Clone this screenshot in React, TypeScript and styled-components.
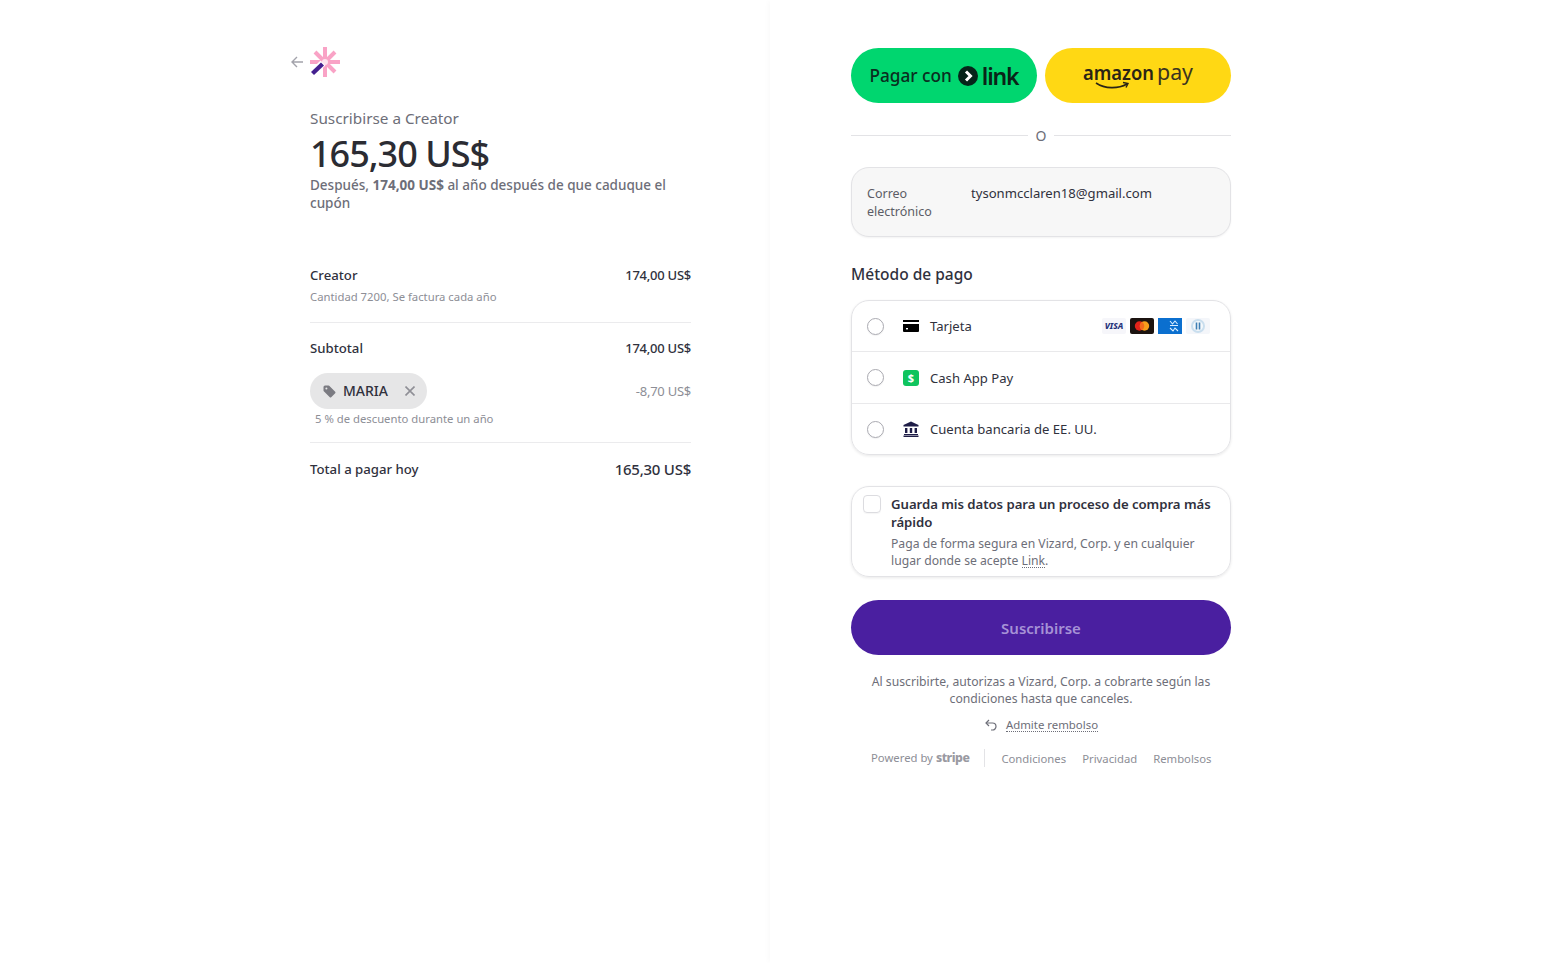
import React from 'react';
import styled, { createGlobalStyle } from 'styled-components';

const GlobalStyle = createGlobalStyle`
  html, body { margin: 0; padding: 0; background: #fff; }
  * { box-sizing: border-box; }
  body {
    font-family: "Noto Sans", "Open Sans", Arial, sans-serif;
    color: #30313d;
    -webkit-font-smoothing: antialiased;
  }
`;

const Page = styled.div`
  display: flex;
  width: 100%;
  height: 963px;
  overflow: hidden;
`;

const SummaryPane = styled.section`
  width: 770px;
  flex: none;
  display: flex;
  justify-content: flex-end;
  padding: 47px 79px 0 0;
`;

const SummaryInner = styled.div`
  width: 381px;
`;

const BrandRow = styled.div`
  display: flex;
  align-items: center;
  gap: 5px;
  height: 30px;
  margin-left: -21px;
  color: #a3a3ab;
`;

const Lead = styled.div`
  margin-top: 31px;
  font-size: 15.3px;
  line-height: 20px;
  color: #6d6e78;
`;

const Amount = styled.div`
  margin-top: 3px;
  font-size: 36px;
  line-height: 46px;
  font-weight: 500;
  letter-spacing: -1px;
  color: #2b2c33;
`;

const Note = styled.div`
  margin-top: -1px;
  font-size: 13.5px;
  line-height: 18px;
  font-weight: 500;
  color: #6d6e78;
  b { font-weight: 700; }
`;

const Lines = styled.div`
  margin-top: 54px;
`;

const Line = styled.div<{ $pad?: number; $ruled?: boolean }>`
  padding-bottom: ${(p) => p.$pad ?? 0}px;
  border-bottom: ${(p) => (p.$ruled ? '1px solid #ebebed' : 'none')};
`;

const LineTop = styled.div`
  display: flex;
  justify-content: space-between;
  align-items: center;
  line-height: 18px;
`;

const LineLabel = styled.span`
  font-size: 13.2px;
  font-weight: 500;
  color: #30313d;
`;

const LineValue = styled.span<{ $big?: boolean; $muted?: boolean }>`
  font-size: ${(p) => (p.$big ? 15 : 13)}px;
  font-weight: ${(p) => (p.$muted ? 400 : 500)};
  letter-spacing: -0.25px;
  color: ${(p) => (p.$muted ? '#8d8e96' : '#30313d')};
`;

const SmallNote = styled.div<{ $indent?: number; $gap?: number }>`
  margin-top: ${(p) => p.$gap ?? 5}px;
  margin-left: ${(p) => p.$indent ?? 0}px;
  font-size: 11.3px;
  line-height: 16px;
  color: #8d8e96;
`;

const SubtotalBlock = styled.div`
  padding-top: 16px;
`;

const DiscountRow = styled(LineTop)`
  margin-top: 16px;
  height: 36px;
`;

const Coupon = styled.div`
  display: inline-flex;
  align-items: center;
  width: 117px;
  height: 36px;
  padding: 0 12px 0 13px;
  border-radius: 18px;
  background: #e6e6e7;
  font-size: 14px;
  font-weight: 500;
  color: #30313d;
`;

const CouponName = styled.span`
  margin-left: 7px;
  flex: 1;
`;

const TotalBlock = styled.div`
  padding-top: 17px;
`;

const CheckoutPane = styled.section`
  flex: 1;
  padding: 48px 0 0 81px;
  box-shadow: -3px 0 5px -1px rgba(0, 0, 0, 0.025);
`;

const CheckoutInner = styled.div`
  width: 380px;
`;

const WalletRow = styled.div`
  display: grid;
  grid-template-columns: 186px 186px;
  gap: 8px;
`;

const WalletButton = styled.div<{ $bg: string }>`
  display: flex;
  align-items: center;
  justify-content: center;
  height: 55px;
  border-radius: 28px;
  background: ${(p) => p.$bg};
  color: #0a2e1f;
`;

const LinkLabel = styled.span`
  font-size: 17.2px;
  font-weight: 500;
  margin-right: 6px;
`;

const LinkWord = styled.span`
  font-size: 23px;
  font-weight: 600;
  letter-spacing: -1.1px;
  line-height: 30px;
  color: #0a2418;
  margin-left: 4px;
`;

const Or = styled.div`
  display: flex;
  align-items: center;
  gap: 8px;
  margin-top: 22px;
  height: 20px;
  font-size: 14px;
  color: #6d6e78;
  &::before, &::after {
    content: '';
    flex: 1;
    height: 1px;
    background: #e3e3e6;
  }
`;

const EmailCard = styled.div`
  display: grid;
  grid-template-columns: 104px 1fr;
  align-items: start;
  margin-top: 22px;
  height: 70px;
  padding: 16px 15px;
  border: 1px solid #e3e3e6;
  border-radius: 18px;
  background: #f7f7f7;
  box-shadow: 0 1px 2px rgba(0, 0, 0, 0.05);
  font-size: 12.5px;
  line-height: 18px;
`;

const EmailLabel = styled.span`
  padding-top: 1px;
  color: #5c5d66;
`;

const EmailValue = styled.span`
  font-size: 13.1px;
  color: #30313d;
`;

const SectionTitle = styled.h2`
  margin: 26px 0 0;
  font-size: 15.5px;
  line-height: 22px;
  font-weight: 500;
  color: #30313d;
`;

const MethodList = styled.div`
  margin-top: 15px;
  border: 1px solid #e3e3e6;
  border-radius: 18px;
  box-shadow: 0 1px 3px rgba(0, 0, 0, 0.09);
  overflow: hidden;
`;

const MethodRow = styled.div`
  display: flex;
  align-items: center;
  height: 51px;
  padding: 0 20px 0 15px;
  font-size: 13.1px;
  color: #30313d;
  &:first-child { height: 50px; }
  &:nth-child(2) { height: 52px; }
  & + & { border-top: 1px solid #e9e9eb; }
`;

const Radio = styled.span`
  width: 17px;
  height: 17px;
  flex: none;
  border-radius: 50%;
  border: 1px solid #a9a9b0;
  box-shadow: 0 1px 1px rgba(0, 0, 0, 0.06);
`;

const MethodIcon = styled.span`
  display: flex;
  width: 16px;
  height: 16px;
  flex: none;
  margin: 0 11px 0 19px;
`;

const CardBrands = styled.div`
  display: flex;
  gap: 4px;
  margin-left: auto;
`;

const SaveCard = styled.div`
  display: flex;
  gap: 10px;
  margin-top: 31px;
  height: 91px;
  padding: 8px 11px;
  border: 1px solid #e3e3e6;
  border-radius: 18px;
  box-shadow: 0 1px 3px rgba(0, 0, 0, 0.09);
`;

const Checkbox = styled.span`
  width: 18px;
  height: 18px;
  flex: none;
  border: 1px solid #dcdce0;
  border-radius: 4px;
  box-shadow: 0 1px 1px rgba(0, 0, 0, 0.04);
`;

const SaveTitle = styled.div`
  font-size: 13.2px;
  line-height: 18px;
  font-weight: 600;
  letter-spacing: -0.05px;
  color: #30313d;
`;

const SaveText = styled.div`
  margin-top: 4px;
  font-size: 12.2px;
  line-height: 17px;
  color: #6d6e78;
`;

const Dotted = styled.span`
  border-bottom: 1px dotted #6d6e78;
  line-height: 13px;
  display: inline-block;
`;

const SubmitButton = styled.button`
  display: block;
  width: 100%;
  height: 55px;
  margin-top: 23px;
  border: none;
  border-radius: 28px;
  background: #4a1fa0;
  color: #a692d6;
  font-family: inherit;
  font-size: 15px;
  font-weight: 600;
`;

const Terms = styled.p`
  margin: 18px 0 0;
  padding: 0 8px;
  text-align: center;
  font-size: 12.2px;
  line-height: 17px;
  color: #6d6e78;
`;

const RefundRow = styled.div`
  display: flex;
  justify-content: center;
  align-items: center;
  gap: 8px;
  margin-top: 9px;
  height: 18px;
  font-size: 11.4px;
  color: #6d6e78;
`;

const Footer = styled.footer`
  display: flex;
  align-items: center;
  margin-top: 14px;
  padding-left: 20px;
  height: 20px;
  font-size: 11.3px;
  color: #8d8e96;
`;

const PoweredBy = styled.span`
  display: flex;
  align-items: baseline;
  gap: 3px;
  padding-right: 15px;
  margin-right: 16px;
  border-right: 1px solid #e3e3e6;
  line-height: 18px;
  b { font-size: 12.3px; font-weight: 800; letter-spacing: -0.5px; color: #9a9aa2; }
`;

const FooterLink = styled.span`
  margin-right: 16px;
  &:last-child { margin-right: 0; }
`;

const Wand = () => (
  <svg width="30" height="30" viewBox="0 0 30 30">
    <g stroke="#f9a3c6" strokeWidth="4">
      <path d="M15 0v30M0 15h30M5 5l20 20M25 5L14 16" />
    </g>
    <circle cx="15" cy="15" r="3" fill="#fde3ee" />
    <path d="M2 26.5L13 16" stroke="#fff" strokeWidth="7" />
    <path d="M2.5 26.5L12.5 17" stroke="#44208f" strokeWidth="4.4" />
  </svg>
);

const BackArrow = () => (
  <svg width="16" height="16" viewBox="0 0 16 16" fill="none" stroke="currentColor" strokeWidth="1.4">
    <path d="M14 8H3M8 3L3 8l5 5" />
  </svg>
);

const LinkBadge = () => (
  <svg width="20" height="20" viewBox="0 0 20 20">
    <circle cx="10" cy="10" r="10" fill="#06241a" />
    <path d="M8 5.5L12.5 10 8 14.5" fill="none" stroke="#fff" strokeWidth="3" />
  </svg>
);

const AmazonPay = () => (
  <svg width="112" height="36" viewBox="0 0 112 36">
    <text x="1" y="22" fontFamily="'Noto Sans', sans-serif" fontSize="20" fontWeight="600" textLength="71" lengthAdjust="spacingAndGlyphs" fill="#2a2416">
      amazon
    </text>
    <text x="75" y="22" fontFamily="'Noto Sans', sans-serif" fontSize="21" textLength="36" lengthAdjust="spacingAndGlyphs" fill="#3a3320">
      pay
    </text>
    <path d="M14 25c9 6 22 6 31 1" fill="none" stroke="#2a2416" strokeWidth="1.6" />
    <path d="M41 24.5l5 1-2 4" fill="none" stroke="#2a2416" strokeWidth="1.4" />
  </svg>
);

const TagIcon = () => (
  <svg width="13" height="13" viewBox="0 0 13 13">
    <path d="M0.5 2v3.5a1 1 0 0 0 .3.7l6 6a1 1 0 0 0 1.4 0l4-4a1 1 0 0 0 0-1.4l-6-6a1 1 0 0 0-.7-.3H2a1.5 1.5 0 0 0-1.5 1.5z" fill="#7b7b82" />
    <circle cx="3.4" cy="3.4" r="1" fill="#e6e6e7" />
  </svg>
);

const CloseIcon = () => (
  <svg width="10" height="10" viewBox="0 0 10 10" stroke="#8f8f96" strokeWidth="1.6">
    <path d="M0.5 0.5l9 9M9.5 0.5l-9 9" />
  </svg>
);

const CardIcon = () => (
  <svg width="16" height="16" viewBox="0 0 16 16">
    <rect y="2" width="16" height="2" fill="#000" />
    <path d="M0 6h16v7a1 1 0 0 1-1 1H1a1 1 0 0 1-1-1z" fill="#000" />
    <rect x="3" y="10" width="2" height="1.4" fill="#fff" />
  </svg>
);

const CashAppIcon = () => (
  <svg width="16" height="16" viewBox="0 0 16 16">
    <rect width="16" height="16" rx="3" fill="#0fc45e" />
    <text x="8" y="12" textAnchor="middle" fontFamily="'Noto Sans', sans-serif" fontSize="11" fontWeight="700" fill="#fff">
      $
    </text>
  </svg>
);

const BankIcon = () => (
  <svg width="16" height="16" viewBox="0 0 16 16" fill="#1f1d47">
    <path d="M8 0.5L0.5 4v1.5h15V4z" />
    <path d="M2 7h2.4v5H2zM6.8 7h2.4v5H6.8zM11.6 7H14v5h-2.4zM1 13h14v1H1zM0.5 14.6h15V16H.5z" />
  </svg>
);

const VisaMark = () => (
  <svg width="24" height="16" viewBox="0 0 24 16">
    <rect width="24" height="16" rx="2" fill="#f6f6fa" />
    <text x="12" y="11.2" textAnchor="middle" fontFamily="'Noto Sans', sans-serif" fontSize="8.5" fontWeight="800" fontStyle="italic" fill="#26337a">
      VISA
    </text>
  </svg>
);

const MasterMark = () => (
  <svg width="24" height="16" viewBox="0 0 24 16">
    <rect width="24" height="16" rx="2" fill="#1b1310" />
    <circle cx="9.5" cy="8" r="4.7" fill="#e2231a" />
    <circle cx="14.5" cy="8" r="4.7" fill="#f79e1b" />
    <path d="M12 4a4.7 4.7 0 0 1 0 8 4.7 4.7 0 0 1 0-8z" fill="#f26a1b" />
  </svg>
);

const AmexMark = () => (
  <svg width="24" height="16" viewBox="0 0 24 16">
    <rect width="24" height="16" fill="#0b6fcf" />
    <g fill="none" stroke="#dbeeff" strokeWidth="1.1">
      <path d="M12 3l2.5 3 2.5-3 2.5 3" />
      <path d="M12 7.5h8M12 10l3 3 2-3 3 3" />
    </g>
  </svg>
);

const DinersMark = () => (
  <svg width="24" height="16" viewBox="0 0 24 16">
    <rect width="24" height="16" rx="2" fill="#f4f6fa" />
    <circle cx="12" cy="8" r="7" fill="#c9deee" />
    <circle cx="12" cy="8" r="5" fill="#f4f8fb" />
    <path d="M10.5 4.6v6.8M13.5 4.6v6.8" stroke="#3f7fb5" strokeWidth="1.6" />
  </svg>
);

const RefundIcon = () => (
  <svg width="14" height="14" viewBox="0 0 14 14" fill="none" stroke="#6d6e78" strokeWidth="1.2">
    <path d="M5 2L2 5l3 3" />
    <path d="M2 5h6.5a3.5 3.5 0 0 1 0 7H7" />
  </svg>
);

const App = () => (
  <Page>
    <GlobalStyle />
    <SummaryPane>
      <SummaryInner>
        <BrandRow>
          <BackArrow />
          <Wand />
        </BrandRow>
        <Lead>Suscribirse a Creator</Lead>
        <Amount>165,30 US$</Amount>
        <Note>
          Después, <b>174,00 US$</b> al año después de que caduque el cupón
        </Note>
        <Lines>
          <Line $pad={17} $ruled>
            <LineTop>
              <LineLabel>Creator</LineLabel>
              <LineValue>174,00 US$</LineValue>
            </LineTop>
            <SmallNote>Cantidad 7200, Se factura cada año</SmallNote>
          </Line>
          <Line $pad={15} $ruled>
            <SubtotalBlock>
              <LineTop>
                <LineLabel>Subtotal</LineLabel>
                <LineValue>174,00 US$</LineValue>
              </LineTop>
              <DiscountRow>
                <Coupon>
                  <TagIcon />
                  <CouponName>MARIA</CouponName>
                  <CloseIcon />
                </Coupon>
                <LineValue $muted>-8,70 US$</LineValue>
              </DiscountRow>
              <SmallNote $indent={5} $gap={2}>
                5 % de descuento durante un año
              </SmallNote>
            </SubtotalBlock>
          </Line>
          <TotalBlock>
            <LineTop>
              <LineLabel>Total a pagar hoy</LineLabel>
              <LineValue $big>165,30 US$</LineValue>
            </LineTop>
          </TotalBlock>
        </Lines>
      </SummaryInner>
    </SummaryPane>
    <CheckoutPane>
      <CheckoutInner>
        <WalletRow>
          <WalletButton $bg="#00d66f">
            <LinkLabel>Pagar con</LinkLabel>
            <LinkBadge />
            <LinkWord>link</LinkWord>
          </WalletButton>
          <WalletButton $bg="#ffd814">
            <AmazonPay />
          </WalletButton>
        </WalletRow>
        <Or>O</Or>
        <EmailCard>
          <EmailLabel>Correo electrónico</EmailLabel>
          <EmailValue>tysonmcclaren18@gmail.com</EmailValue>
        </EmailCard>
        <SectionTitle>Método de pago</SectionTitle>
        <MethodList>
          <MethodRow>
            <Radio />
            <MethodIcon>
              <CardIcon />
            </MethodIcon>
            Tarjeta
            <CardBrands>
              <VisaMark />
              <MasterMark />
              <AmexMark />
              <DinersMark />
            </CardBrands>
          </MethodRow>
          <MethodRow>
            <Radio />
            <MethodIcon>
              <CashAppIcon />
            </MethodIcon>
            Cash App Pay
          </MethodRow>
          <MethodRow>
            <Radio />
            <MethodIcon>
              <BankIcon />
            </MethodIcon>
            Cuenta bancaria de EE. UU.
          </MethodRow>
        </MethodList>
        <SaveCard>
          <Checkbox />
          <div>
            <SaveTitle>Guarda mis datos para un proceso de compra más rápido</SaveTitle>
            <SaveText>
              Paga de forma segura en Vizard, Corp. y en cualquier lugar donde se acepte <Dotted>Link</Dotted>.
            </SaveText>
          </div>
        </SaveCard>
        <SubmitButton>Suscribirse</SubmitButton>
        <Terms>Al suscribirte, autorizas a Vizard, Corp. a cobrarte según las condiciones hasta que canceles.</Terms>
        <RefundRow>
          <RefundIcon />
          <Dotted>Admite rembolso</Dotted>
        </RefundRow>
        <Footer>
          <PoweredBy>
            Powered by <b>stripe</b>
          </PoweredBy>
          <FooterLink>Condiciones</FooterLink>
          <FooterLink>Privacidad</FooterLink>
          <FooterLink>Rembolsos</FooterLink>
        </Footer>
      </CheckoutInner>
    </CheckoutPane>
  </Page>
);

export default App;
